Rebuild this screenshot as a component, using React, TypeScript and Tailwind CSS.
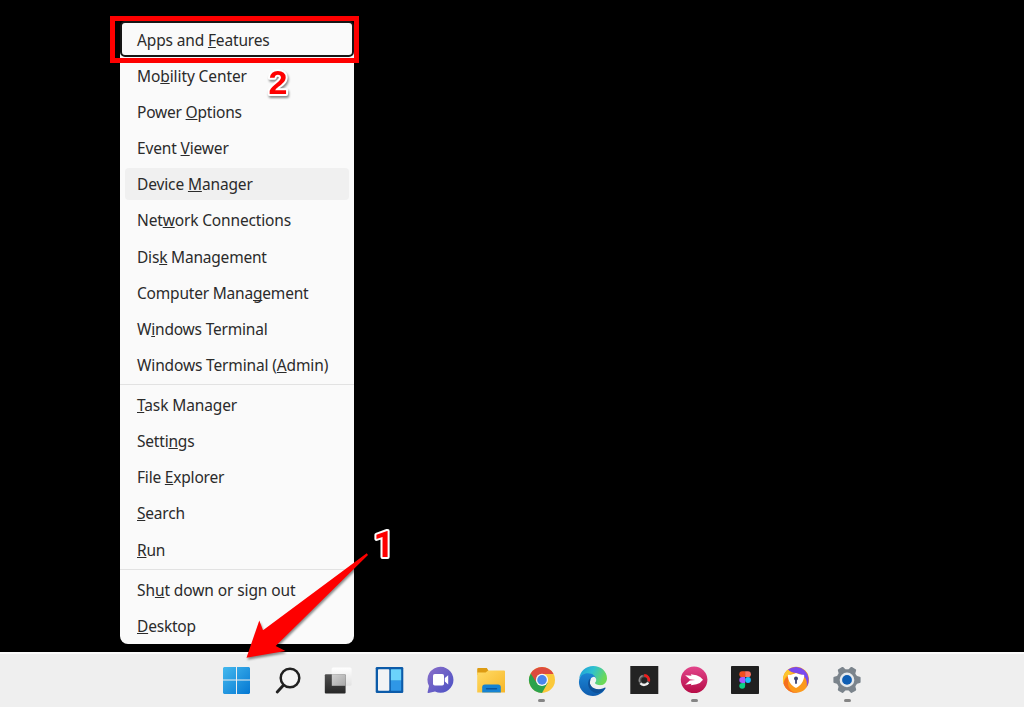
import type { ReactNode } from "react";
import { clsx } from "clsx";

type MenuItem = {
    label: string;
    // index of the underlined access key in the label
    accessKey: number;
    state?: "focused" | "hovered";
    tracking?: string;
};

const menuGroups: MenuItem[][] = [
    [
        { label: "Apps and Features", accessKey: 9, state: "focused", tracking: "tracking-[-0.15px]" },
        { label: "Mobility Center", accessKey: 2, tracking: "tracking-[-0.1px]" },
        { label: "Power Options", accessKey: 6 },
        { label: "Event Viewer", accessKey: 6, tracking: "tracking-[-0.15px]" },
        { label: "Device Manager", accessKey: 7, state: "hovered", tracking: "tracking-[-0.13px]" },
        { label: "Network Connections", accessKey: 3, tracking: "tracking-[-0.15px]" },
        { label: "Disk Management", accessKey: 3 },
        { label: "Computer Management", accessKey: 13 },
        { label: "Windows Terminal", accessKey: 1 },
        { label: "Windows Terminal (Admin)", accessKey: 18, tracking: "tracking-[-0.14px]" },
    ],
    [
        { label: "Task Manager", accessKey: 0, tracking: "tracking-[-0.12px]" },
        { label: "Settings", accessKey: 5 },
        { label: "File Explorer", accessKey: 5 },
        { label: "Search", accessKey: 0 },
        { label: "Run", accessKey: 0 },
    ],
    [
        { label: "Shut down or sign out", accessKey: 2, tracking: "tracking-[-0.1px]" },
        { label: "Desktop", accessKey: 0 },
    ],
];

function MenuRow({ label, accessKey, state, tracking }: MenuItem) {
    return (
        <li
            className={clsx(
                "flex h-[36.13px] items-center",
                state === "focused" &&
                    "rounded-[5px] border-2 border-[#161616] pl-[15px]",
                state !== "focused" && "px-[5px] py-[2px]"
            )}
        >
            <span
                className={clsx(
                    "flex h-full w-full items-center rounded-[4px] pt-[1.4px]",
                    state !== "focused" && "pl-[12px]",
                    state === "hovered" && "bg-[#f0f0f0]"
                )}
            >
                <span className={clsx("whitespace-pre", tracking)}>
                    {label.slice(0, accessKey)}
                    <span className="underline decoration-1 underline-offset-[1px] [text-decoration-skip-ink:none]">
                        {label[accessKey]}
                    </span>
                    {label.slice(accessKey + 1)}
                </span>
            </span>
        </li>
    );
}

function StartMenu() {
    return (
        <nav className="w-[234px] rounded-[8px] bg-[#fafafa] pb-[1px] font-['Noto_Sans',sans-serif] text-[15.5px] leading-[20px] tracking-[-0.2px] text-[#2b2b2b]">
            {menuGroups.map((group, i) => (
                <ul
                    key={i}
                    className={clsx(
                        i > 0 && "mt-[2px] border-t border-[#e2e2e2] pt-[1px]"
                    )}
                >
                    {group.map((item) => (
                        <MenuRow key={item.label} {...item} />
                    ))}
                </ul>
            ))}
        </nav>
    );
}

function Icon({ children }: { children: ReactNode }) {
    return (
        <svg viewBox="0 0 28 28" fill="none" className="h-7 w-7 overflow-visible">
            {children}
        </svg>
    );
}

const StartIcon = () => (
    <Icon>
        <defs>
            <linearGradient
                id="start"
                gradientUnits="userSpaceOnUse"
                x1="0"
                y1="1"
                x2="27"
                y2="28"
            >
                <stop offset="0" stopColor="#45b9ee" />
                <stop offset="1" stopColor="#0477d2" />
            </linearGradient>
        </defs>
        <path
            fill="url(#start)"
            d="M1 1h12v12.5H0V2zM14 1h12l1 1v11.5H14zM0 14.5h13V28H1l-1-1zM14 14.5h13V27l-1 1H14z"
        />
    </Icon>
);

const SearchIcon = () => (
    <Icon>
        <circle cx="16" cy="12" r="9.3" fill="#f6f6f6" stroke="#222" strokeWidth="2.5" />
        <path d="M9.2 19.4 3.2 26" stroke="#222" strokeWidth="2.9" strokeLinecap="round" />
    </Icon>
);

const TaskViewIcon = () => (
    <Icon>
        <defs>
            <linearGradient id="tvDark" x1="0" y1="0" x2="0" y2="1">
                <stop offset="0" stopColor="#515151" />
                <stop offset="1" stopColor="#262626" />
            </linearGradient>
            <linearGradient id="tvMid" x1="0" y1="0" x2="1" y2="1">
                <stop offset="0" stopColor="#d2d2d2" />
                <stop offset="1" stopColor="#a8a8a8" />
            </linearGradient>
            <linearGradient id="tvLight" x1="0" y1="0" x2="0" y2="1">
                <stop offset="0" stopColor="#fff" />
                <stop offset="1" stopColor="#e2e2e2" />
            </linearGradient>
        </defs>
        <rect x="7.6" y="1.5" width="20" height="18.3" rx="1.5" fill="url(#tvLight)" />
        <rect x=".8" y="8.2" width="20.8" height="19.4" rx="1" fill="url(#tvDark)" />
        <path d="M7.8 8.2h13.8v11.6H7.8z" fill="url(#tvMid)" />
    </Icon>
);

const WidgetsIcon = () => (
    <Icon>
        <rect x=".7" y="1" width="27.6" height="26" rx="1.3" fill="#0c5ba9" />
        <rect x="3" y="3.2" width="11.3" height="21.6" rx=".8" fill="#f1f3f5" />
        <rect x="15.8" y="3.2" width="10.4" height="11.6" rx=".6" fill="#6bd3fb" />
        <rect x="15.8" y="14.4" width="10.4" height="10.4" rx=".6" fill="#2f97e6" />
    </Icon>
);

const ChatIcon = () => (
    <Icon>
        <defs>
            <linearGradient id="chat" x1="0" y1="0" x2="1" y2="1">
                <stop offset="0" stopColor="#8a6fc9" />
                <stop offset="1" stopColor="#4a50c4" />
            </linearGradient>
        </defs>
        <path
            fill="url(#chat)"
            d="M14.6.8a13 13 0 1 1-5.6 24.8L2.6 27c-.7.1-1.2-.4-1-1l1.4-6A13 13 0 0 1 14.6.8z"
        />
        <rect x="7" y="8" width="11" height="11.6" rx="1.8" fill="#fff" />
        <path d="m18.8 12 3.4-2.8v9.2l-3.4-2.8z" fill="#fff" />
    </Icon>
);

const ExplorerIcon = () => (
    <Icon>
        <defs>
            <linearGradient id="folder" x1="0" y1="0" x2="1" y2="1">
                <stop offset="0" stopColor="#ffdb66" />
                <stop offset="1" stopColor="#f7b627" />
            </linearGradient>
        </defs>
        <path d="M.2 3a1 1 0 0 1 1-1h8.6l1.6 2.4V9H.2z" fill="#dd9b12" />
        <path d="M.2 6.600h8.400l2.500-2.200H27a1 1 0 0 1 1 1v21.200H.2z" fill="url(#folder)" />
        <path d="M5.200 26.600v-5.400a2.800 2.800 0 0 1 2.800-2.800h13a2.800 2.800 0 0 1 2.800 2.800v5.400z" fill="#1683d2" />
        <rect x="8.800" y="21.900" width="11.400" height="1.600" rx=".8" fill="#0b559c" />
    </Icon>
);

const ChromeIcon = () => (
    <Icon>
        <circle cx="14" cy="13.9" r="13" fill="#fbc93b" />
        <path d="M14 13.9 2.74 7.4A13 13 0 0 0 14 26.9l5.6-9.8z" fill="#2ba24c" />
        <path d="M2.74 7.4a13 13 0 0 1 22.52 0L25.3 7.9H14a6 6 0 0 0-5.2 9z" fill="#dd4b3e" />
        <circle cx="14" cy="13.9" r="6.1" fill="#f7f7f7" />
        <circle cx="14" cy="13.9" r="4.8" fill="#4a86ec" />
    </Icon>
);

const EdgeIcon = () => (
    <Icon>
        <defs>
            <linearGradient id="edgeTop" x1="0" y1="0" x2="1" y2=".4">
                <stop offset="0" stopColor="#1c9bdc" />
                <stop offset=".5" stopColor="#2fc1cf" />
                <stop offset="1" stopColor="#6bd957" />
            </linearGradient>
            <linearGradient id="edgeLow" x1="0" y1="0" x2="0" y2="1">
                <stop offset="0" stopColor="#1b86d5" />
                <stop offset="1" stopColor="#0f5cae" />
            </linearGradient>
        </defs>
        <path
            d="M.2 12.6C1 5.2 7 0 14.2 0 22 0 28 5.6 28 12.200c0 4.400-3.400 7.300-7.500 7.300-3.400 0-5-1.200-5-2.200 0-.7 1.300-1.300 1.300-3.400 0-3.200-3.400-5.600-7.500-5.600-4 0-7.400 1.700-9.100 4.300z"
            fill="url(#edgeTop)"
        />
        <path
            d="M.2 13.4C1.4 9.3 4.9 7.200 8.800 7.200c5 0 8.200 3 8.200 6.200 0 .5-.1.9-.3 1.400-.7-1.300-1.800-2-3.100-2-2.800 1.300-3.300 3.600-2.300 6.200 1.500 4 6.400 5.400 10.800 4.300 1.300-.3 2.500-.9 3.500-1.400.6-.3 1 .2.700.7A14 14 0 0 1 .2 13.400z"
            fill="url(#edgeLow)"
        />
        <path
            d="M11 12.600c-4.100 4.100-1.400 13.700 7 14.700 3.400-.5 6.400-2.500 8.300-4.900.3-.5-.1-1-.7-.7-4.500 2.400-11 2.100-13.800-2.200-1.500-2.300-1.300-4.900.9-6.600z"
            fill="#0d5098"
        />
        <path
            d="M14.800 10.800c-2.200.3-3.600 1.900-3.400 4 .4 4.200 4.600 6.700 9 6.500 3-.1 5.400-1.400 6.900-3.500-1.800 1.100-4.200 1.600-6.700 1.400-3-.3-4.800-1.300-4.600-2.400.2-.7 1.400-1.400 1.200-3.300-.1-1.400-1-2.500-2.400-2.700z"
            fill="#eef1f2"
        />
    </Icon>
);

const RecorderIcon = () => (
    <Icon>
        <path d="M.3 0h28v28H.3z" fill="#232323" />
        <circle cx="14.2" cy="14.2" r="4.4" stroke="#555" strokeWidth="2.8" />
        <path d="M14.2 9.4a4.8 4.8 0 0 1 4.600 6" stroke="#f01c1c" strokeWidth="2.600" />
        <path d="M18.200 16.600a4.800 4.800 0 0 1-7.800.600" stroke="#eee" strokeWidth="2.400" />
        <path d="M9.600 16a5 5 0 0 1 3-6.300" stroke="#8b8b8b" strokeWidth="1.400" />
    </Icon>
);

const SkitchIcon = () => (
    <Icon>
        <defs>
            <linearGradient id="skitch" x1="0" y1="0" x2="0" y2="1">
                <stop offset="0" stopColor="#e2458b" />
                <stop offset="1" stopColor="#b60c46" />
            </linearGradient>
        </defs>
        <circle cx="14.100" cy="13.800" r="13.300" fill="url(#skitch)" />
        <path
            d="m5.200 9.200 6.300.6-.7-1.500 5.700 1q4.100 1 6.500 4.500-2.400 3.500-6.500 4.500l-5.700 1 .7-1.500-6.300.9 4.600-4.200 5.400-.6-5.400-.7z"
            fill="#fff"
        />
    </Icon>
);

const FigmaIcon = () => (
    <Icon>
        <rect width="28" height="28" rx=".8" fill="#202020" />
        <path d="M14.1 5.3h-2.900a2.900 2.900 0 0 0 0 5.800h2.900z" fill="#f24e1e" />
        <path d="M14.1 5.300H17a2.900 2.900 0 0 1 0 5.800h-2.900z" fill="#fb7262" />
        <path d="M14.1 11.100h-2.900a2.900 2.900 0 0 0 0 5.800h2.900z" fill="#a259ff" />
        <circle cx="17" cy="14" r="2.900" fill="#1abcfe" />
        <path d="M14.1 16.900h-2.900a2.900 2.900 0 1 0 2.900 2.900z" fill="#0acf83" />
    </Icon>
);

const SecureBrowserIcon = () => (
    <Icon>
        <circle cx="14" cy="13.8" r="13" fill="#fb9a1c" />
        <path d="M6 3.6A13 13 0 0 1 24.6 21.2c1.3-6-1-11.5-7-13.2C13 6.7 8.3 6.8 6 3.6z" fill="#7a49ee" />
        <path d="M6 3.6A13 13 0 0 0 1.5 17.8C2 11 6 7.5 12 7.2 9.5 6.6 7.2 5.6 6 3.6z" fill="#fdc62d" />
        <path d="M1.500 17.800A13 13 0 0 0 16 26.700c-6 0-10-4-10-9.700 0-3 .8-5.500 2.600-7.800-4 1.500-6.500 4.500-7.100 8.600z" fill="#f5701f" />
        <path d="M14 6.900c2.400 1.200 4.600 1.800 7 1.800 1 0 1.300.4 1.200 1.400-.5 5.300-3.100 9.500-8.200 12-5.100-2.500-7.700-6.700-8.200-12-.1-1 .2-1.400 1.200-1.400 2.400 0 4.600-.6 7-1.800z" fill="#fff" />
        <circle cx="14" cy="12.6" r="2" fill="#39406f" />
        <path d="M13.100 13.200h1.800v4.500h-1.800z" fill="#39406f" />
    </Icon>
);

const SettingsIcon = () => (
    <Icon>
        <g fill="#7b848c">
            <circle cx="14" cy="13.9" r="10.6" />
            {[0, 60, 120, 180, 240, 300].map((angle) => (
                <path
                    key={angle}
                    transform={`rotate(${angle + 30} 14 13.9)`}
                    d="M10.8 1.2q.2-.9 1.1-.9h4.2q.9 0 1.1.9l1.1 4.3h-8.600z"
                />
            ))}
        </g>
        <circle cx="14" cy="13.9" r="7.3" fill="#e6eaed" />
        <circle cx="14" cy="13.9" r="4.9" fill="#0e5eb4" />
    </Icon>
);

const taskbarApps = [
    { name: "Start", icon: <StartIcon /> },
    { name: "Search", icon: <SearchIcon /> },
    { name: "Task View", icon: <TaskViewIcon /> },
    { name: "Widgets", icon: <WidgetsIcon /> },
    { name: "Chat", icon: <ChatIcon /> },
    { name: "File Explorer", icon: <ExplorerIcon /> },
    { name: "Chrome", icon: <ChromeIcon />, running: true },
    { name: "Edge", icon: <EdgeIcon /> },
    { name: "Recorder", icon: <RecorderIcon /> },
    { name: "Skitch", icon: <SkitchIcon />, running: true },
    { name: "Figma", icon: <FigmaIcon /> },
    { name: "Secure Browser", icon: <SecureBrowserIcon /> },
    { name: "Settings", icon: <SettingsIcon />, running: true },
];

function Taskbar() {
    return (
        <footer className="flex h-[55px] gap-[22.87px] border-t-2 border-[#fbfbfb] bg-[#efefef] pt-[12px] pl-[222.7px]">
            {taskbarApps.map(({ name, icon, running }) => (
                <button
                    key={name}
                    aria-label={name}
                    className="flex w-7 shrink-0 flex-col items-center gap-[4.5px]"
                >
                    {icon}
                    {running && (
                        <span className="h-[3px] w-[7px] rounded-full bg-[#858585]" />
                    )}
                </button>
            ))}
        </footer>
    );
}

// Red callouts drawn over the desktop
function Annotations() {
    return (
        <>
            <div className="absolute top-[16px] left-[110px] h-[47px] w-[249px] border-[5px] border-[#fe0000]" />
            <svg
                viewBox="0 0 1024 707"
                className="pointer-events-none absolute inset-0 h-full w-full [filter:drop-shadow(1px_2px_1px_rgba(0,0,0,0.45))]"
            >
                <path
                    fill="#fe0000"
                    d="M246.5 657.8 259.3 620.5 263 630.3 366.7 553.3 368 555 275.7 646 285.5 651z"
                />
                <g
                    fill="#fe0000"
                    stroke="#fff"
                    strokeWidth="4"
                    strokeLinejoin="round"
                    paintOrder="stroke"
                    fontWeight="700"
                >
                    <text
                        x="268.5"
                        y="94"
                        fontSize="34"
                        fontFamily="Liberation Sans, sans-serif"
                    >
                        2
                    </text>
                    <text
                        x="373.5"
                        y="556.5"
                        fontSize="36"
                        fontFamily="Roboto, sans-serif"
                    >
                        1
                    </text>
                </g>
            </svg>
        </>
    );
}

export default function App() {
    return (
        <div className="relative flex h-[707px] w-[1024px] flex-col overflow-hidden bg-black">
            <main className="flex flex-1 items-start pt-[21px] pl-[120px]">
                <StartMenu />
            </main>
            <Taskbar />
            <Annotations />
        </div>
    );
}
